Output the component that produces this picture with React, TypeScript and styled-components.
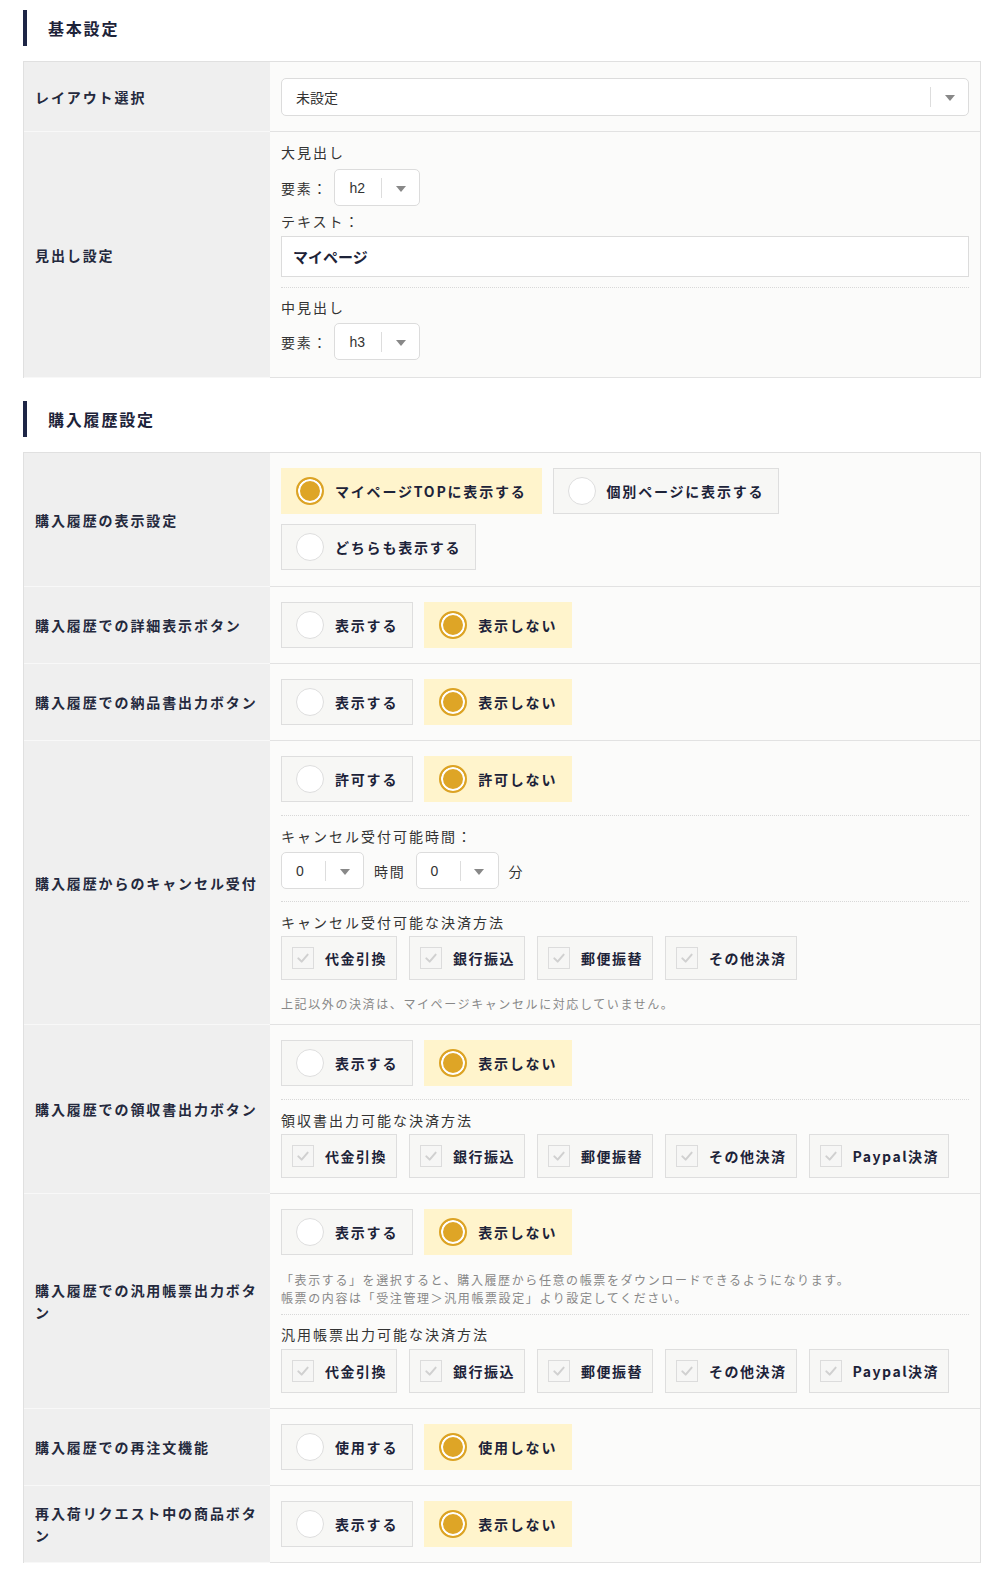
import React from 'react'
import styled, { createGlobalStyle } from 'styled-components'

const GlobalStyle = createGlobalStyle`
  * { box-sizing: border-box; }
  body {
    margin: 0;
    background: #fff;
    font-family: "Noto Sans CJK JP", "Noto Sans", sans-serif;
    color: #333;
  }
`

const Page = styled.div`
  padding: 10px 17px 0 23px;
`

const SectionTitle = styled.h2<{ $first?: boolean }>`
  margin: ${({ $first }) => ($first ? '0' : '23px')} 0 15px;
  height: 36px;
  display: flex;
  align-items: center;
  border-left: 4px solid #1e2646;
  padding-left: 21px;
  font-size: 16px;
  font-weight: 700;
  letter-spacing: 1.8px;
  color: #1d2339;
`

const Table = styled.div`
  border: 1px solid #e0e0e0;
  border-bottom: none;
`

const Row = styled.div`
  display: grid;
  grid-template-columns: 246px 1fr;
`

const Label = styled.div`
  background: #efefef;
  border-bottom: 1px solid #f8f8f8;
  padding: 0 8px 0 11px;
  display: flex;
  align-items: center;
  font-size: 14px;
  font-weight: 700;
  line-height: 22px;
  letter-spacing: 1.9px;
  color: #24293d;
`

const Content = styled.div<{ $pad?: string }>`
  background: #fbfbfa;
  border-bottom: 1px solid #e2e2e2;
  padding: ${({ $pad }) => $pad || '15px 11px'};
`

const SubTitle = styled.div<{ $mt?: number }>`
  margin-top: ${({ $mt }) => $mt || 0}px;
  font-size: 14px;
  line-height: 20px;
  letter-spacing: 2px;
  color: #333;
`

const Inline = styled.div<{ $mt?: number; $gap?: number }>`
  margin-top: ${({ $mt }) => $mt || 0}px;
  display: flex;
  align-items: center;
  gap: ${({ $gap }) => $gap ?? 6}px;
  font-size: 14px;
  letter-spacing: 1.8px;
  color: #333;
`

const Divider = styled.div<{ $top?: number; $bottom?: number }>`
  margin: ${({ $top }) => $top ?? 13}px 0 ${({ $bottom }) => $bottom ?? 10}px;
  border-top: 1px dotted #d8d8d8;
`

const Note = styled.p<{ $mt?: number }>`
  margin: ${({ $mt }) => $mt ?? 15}px 0 0;
  font-size: 12px;
  line-height: 18px;
  letter-spacing: 1.6px;
  color: #888;
`

const SelectBox = styled.div<{ $w?: number; $h?: number }>`
  width: ${({ $w }) => ($w ? `${$w}px` : '100%')};
  height: ${({ $h }) => $h || 37}px;
  background: #fff;
  border: 1px solid #dcdcdc;
  border-radius: 5px;
  display: flex;
  align-items: center;
  padding-left: 14px;
  font-family: "Liberation Sans", "Noto Sans CJK JP", sans-serif;
  font-size: 14px;
  letter-spacing: 0;
  color: #333;
`

const SelectValue = styled.span`
  flex: 1;
`

const SelectToggle = styled.span`
  width: 38px;
  height: 20px;
  border-left: 1px solid #ddd;
  display: flex;
  align-items: center;
  justify-content: center;
  &::after {
    content: '';
    border-left: 5px solid transparent;
    border-right: 5px solid transparent;
    border-top: 6px solid #888;
    margin-top: 2px;
  }
`

const TextInput = styled.div<{ $mt?: number }>`
  margin-top: ${({ $mt }) => $mt || 0}px;
  height: 41px;
  background: #fff;
  border: 1px solid #dcdcdc;
  display: flex;
  align-items: center;
  padding-left: 11px;
  font-size: 15px;
  font-weight: 700;
  color: #1d2339;
`

const Group = styled.div<{ $gap?: number; $mt?: number }>`
  margin-top: ${({ $mt }) => $mt || 0}px;
  display: flex;
  flex-wrap: wrap;
  gap: 10px ${({ $gap }) => $gap ?? 11}px;
`

const Choice = styled.div<{ $on?: boolean; $check?: boolean }>`
  height: ${({ $check }) => ($check ? 44 : 46)}px;
  display: flex;
  align-items: center;
  gap: 11px;
  padding: ${({ $check }) => ($check ? '0 9px 0 10px' : '0 14px')};
  background: ${({ $on }) => ($on ? '#fff4cc' : '#f7f7f5')};
  border: 1px solid ${({ $on }) => ($on ? '#fff4cc' : '#dedede')};
  font-size: 14px;
  font-weight: 700;
  letter-spacing: ${({ $check }) => ($check ? 1.5 : 1.8)}px;
  color: #1d2339;
  white-space: nowrap;
`

const Dot = styled.span<{ $on?: boolean }>`
  width: 28px;
  height: 28px;
  flex: none;
  border-radius: 50%;
  border: ${({ $on }) => ($on ? '2px solid #dca324' : '1px solid #dedede')};
  background: ${({ $on }) => ($on ? '#dea526' : '#fff')};
  box-shadow: ${({ $on }) => ($on ? 'inset 0 0 0 2px #fff' : 'none')};
`

const Box = styled.span`
  width: 22px;
  height: 22px;
  flex: none;
  border: 1px solid #dcdcdc;
  background: #f6f6f5;
  display: flex;
  align-items: center;
  justify-content: center;
`

const Select = ({ value, w, h }: { value: string; w?: number; h?: number }) => (
  <SelectBox $w={w} $h={h}>
    <SelectValue>{value}</SelectValue>
    <SelectToggle />
  </SelectBox>
)

const Radios = ({ items, on }: { items: string[]; on: number }) => (
  <Group>
    {items.map((t, i) => (
      <Choice key={t} $on={i === on}>
        <Dot $on={i === on} />
        {t}
      </Choice>
    ))}
  </Group>
)

const Checks = ({ items, mt }: { items: string[]; mt?: number }) => (
  <Group $gap={12} $mt={mt}>
    {items.map((t) => (
      <Choice key={t} $check>
        <Box>
          <svg width="16" height="16" viewBox="0 0 24 24" fill="none" stroke="#d0d0d0" strokeWidth="3" strokeLinecap="round" strokeLinejoin="round">
            <polyline points="5 12.5 10 17.5 19 7" />
          </svg>
        </Box>
        {t}
      </Choice>
    ))}
  </Group>
)

const pay4 = ['代金引換', '銀行振込', '郵便振替', 'その他決済']
const pay5 = [...pay4, 'Paypal決済']
const showHide = ['表示する', '表示しない']

const App = () => (
  <Page>
    <GlobalStyle />
    <SectionTitle $first>基本設定</SectionTitle>
    <Table>
      <Row>
        <Label>レイアウト選択</Label>
        <Content $pad="16px 11px 15px">
          <Select value="未設定" h={38} />
        </Content>
      </Row>
      <Row>
        <Label>見出し設定</Label>
        <Content $pad="10px 11px 17px">
          <SubTitle>大見出し</SubTitle>
          <Inline $mt={7}>
            要素：
            <Select value="h2" w={86} />
          </Inline>
          <SubTitle $mt={5}>テキスト：</SubTitle>
          <TextInput $mt={5}>マイページ</TextInput>
          <Divider $top={10} $bottom={9} />
          <SubTitle>中見出し</SubTitle>
          <Inline $mt={6}>
            要素：
            <Select value="h3" w={86} />
          </Inline>
        </Content>
      </Row>
    </Table>

    <SectionTitle>購入履歴設定</SectionTitle>
    <Table>
      <Row>
        <Label>購入履歴の表示設定</Label>
        <Content $pad="15px 11px 16px">
          <Radios items={['マイページTOPに表示する', '個別ページに表示する', 'どちらも表示する']} on={0} />
        </Content>
      </Row>
      <Row>
        <Label>購入履歴での詳細表示ボタン</Label>
        <Content>
          <Radios items={showHide} on={1} />
        </Content>
      </Row>
      <Row>
        <Label>購入履歴での納品書出力ボタン</Label>
        <Content>
          <Radios items={showHide} on={1} />
        </Content>
      </Row>
      <Row>
        <Label>購入履歴からのキャンセル受付</Label>
        <Content $pad="15px 11px 11px">
          <Radios items={['許可する', '許可しない']} on={1} />
          <Divider />
          <SubTitle>キャンセル受付可能時間：</SubTitle>
          <Inline $mt={6} $gap={10}>
            <Select value="0" w={83} />
            時間
            <Select value="0" w={83} />
            分
          </Inline>
          <Divider $top={12} />
          <SubTitle>キャンセル受付可能な決済方法</SubTitle>
          <Checks items={pay4} mt={4} />
          <Note>上記以外の決済は、マイページキャンセルに対応していません。</Note>
        </Content>
      </Row>
      <Row>
        <Label>購入履歴での領収書出力ボタン</Label>
        <Content>
          <Radios items={showHide} on={1} />
          <Divider />
          <SubTitle>領収書出力可能な決済方法</SubTitle>
          <Checks items={pay5} mt={4} />
        </Content>
      </Row>
      <Row>
        <Label>購入履歴での汎用帳票出力ボタン</Label>
        <Content>
          <Radios items={showHide} on={1} />
          <Note $mt={16}>
            「表示する」を選択すると、購入履歴から任意の帳票をダウンロードできるようになります。
            <br />
            帳票の内容は「受注管理＞汎用帳票設定」より設定してください。
          </Note>
          <Divider $top={7} $bottom={9} />
          <SubTitle>汎用帳票出力可能な決済方法</SubTitle>
          <Checks items={pay5} mt={5} />
        </Content>
      </Row>
      <Row>
        <Label>購入履歴での再注文機能</Label>
        <Content>
          <Radios items={['使用する', '使用しない']} on={1} />
        </Content>
      </Row>
      <Row>
        <Label>再入荷リクエスト中の商品ボタン</Label>
        <Content>
          <Radios items={showHide} on={1} />
        </Content>
      </Row>
    </Table>
  </Page>
)

export default App
